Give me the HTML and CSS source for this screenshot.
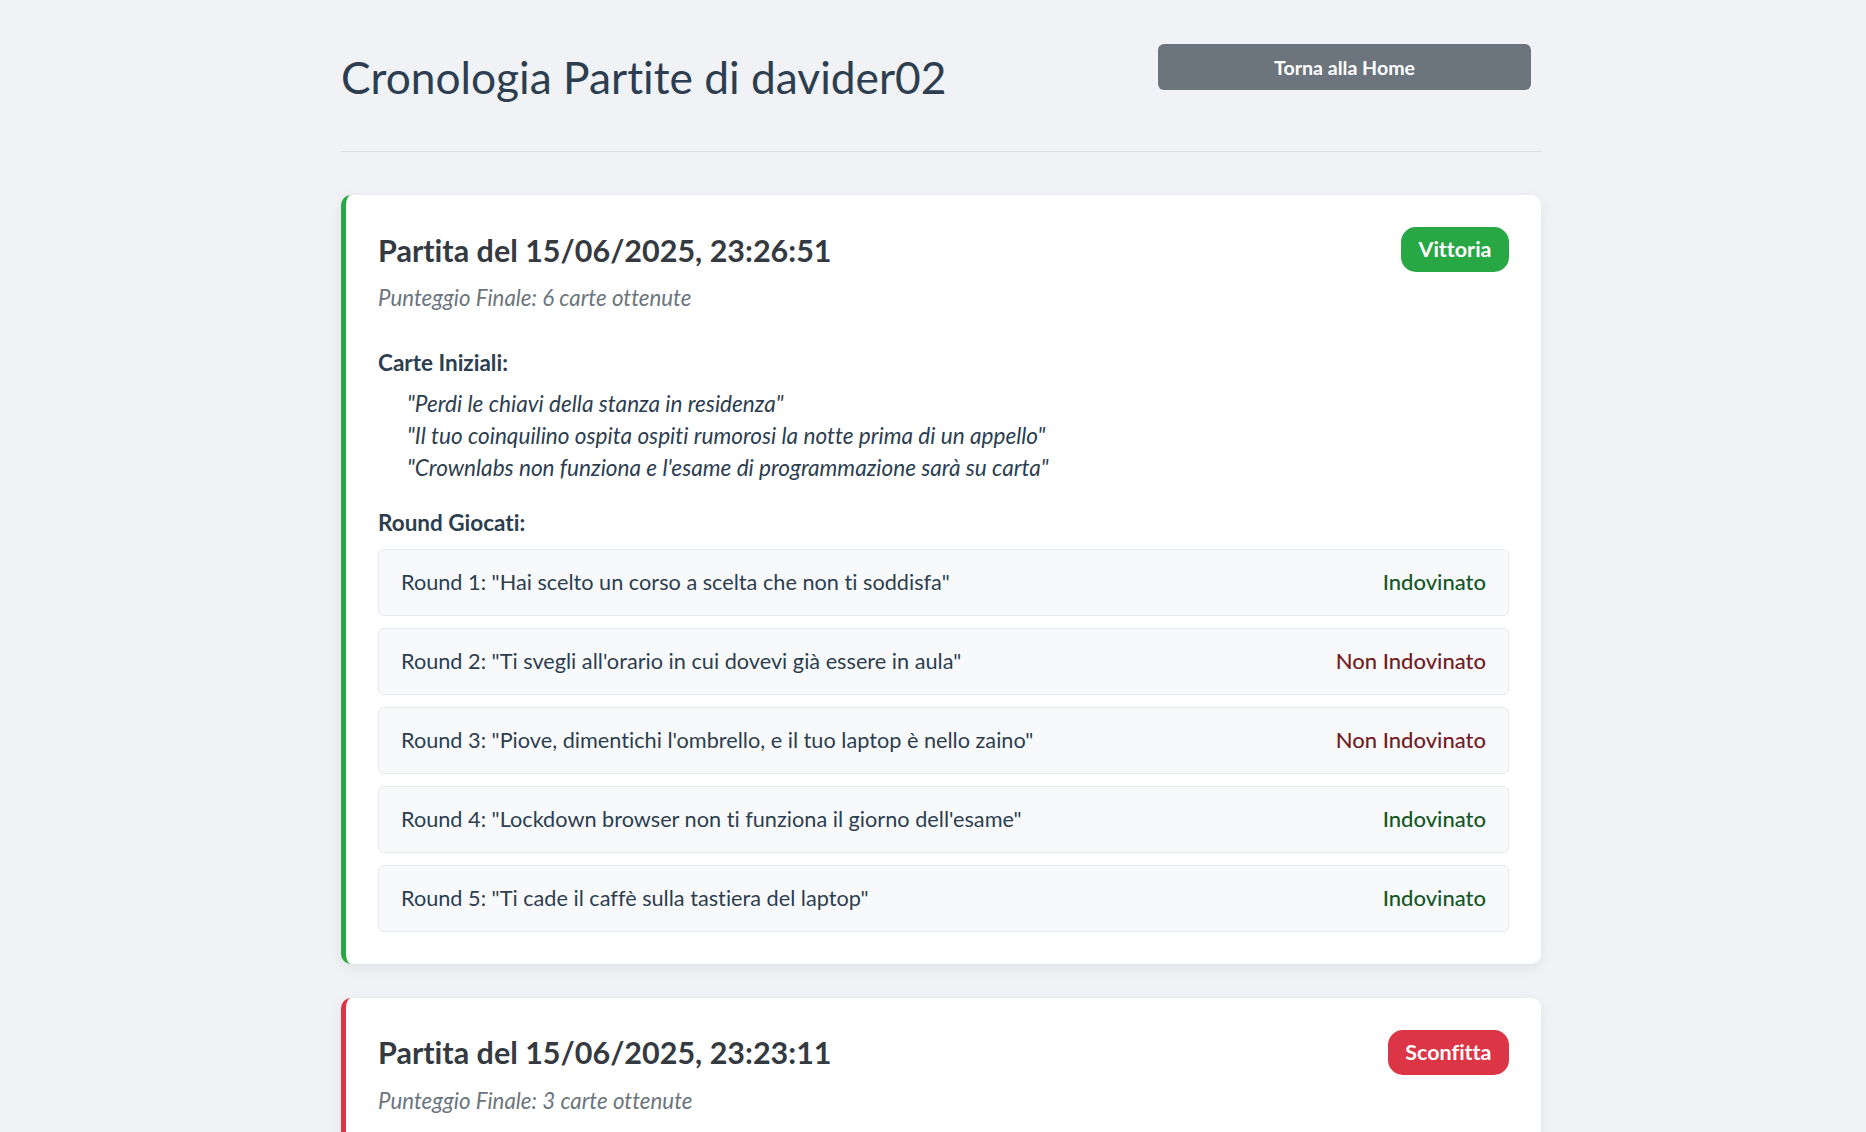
FILE: index.html
```html
<!DOCTYPE html>
<html lang="it">
<head>
<meta charset="utf-8">
<title>Cronologia Partite</title>
<link rel="stylesheet" href="styles.css">
</head>
<body>
<div class="page">
  <header class="header">
    <h1 class="title">Cronologia Partite di davider02</h1>
    <button class="home-btn" type="button">Torna alla Home</button>
  </header>
  <hr class="divider">

  <section class="game game-win">
    <div class="game-head">
      <h2 class="game-title">Partita del 15/06/2025, 23:26:51</h2>
      <span class="badge badge-win">Vittoria</span>
    </div>
    <p class="score">Punteggio Finale: 6 carte ottenute</p>

    <h3 class="label label-cards">Carte Iniziali:</h3>
    <ul class="cards">
      <li>"Perdi le chiavi della stanza in residenza"</li>
      <li>"Il tuo coinquilino ospita ospiti rumorosi la notte prima di un appello"</li>
      <li>"Crownlabs non funziona e l'esame di programmazione sarà su carta"</li>
    </ul>

    <h3 class="label label-rounds">Round Giocati:</h3>
    <ul class="rounds">
      <li class="round"><span>Round 1: "Hai scelto un corso a scelta che non ti soddisfa"</span><span class="res ok">Indovinato</span></li>
      <li class="round"><span>Round 2: "Ti svegli all'orario in cui dovevi già essere in aula"</span><span class="res ko">Non Indovinato</span></li>
      <li class="round"><span>Round 3: "Piove, dimentichi l'ombrello, e il tuo laptop è nello zaino"</span><span class="res ko">Non Indovinato</span></li>
      <li class="round"><span>Round 4: "Lockdown browser non ti funziona il giorno dell'esame"</span><span class="res ok">Indovinato</span></li>
      <li class="round"><span>Round 5: "Ti cade il caffè sulla tastiera del laptop"</span><span class="res ok">Indovinato</span></li>
    </ul>
  </section>

  <section class="game game-loss">
    <div class="game-head">
      <h2 class="game-title">Partita del 15/06/2025, 23:23:11</h2>
      <span class="badge badge-loss">Sconfitta</span>
    </div>
    <p class="score">Punteggio Finale: 3 carte ottenute</p>

    <h3 class="label label-cards">Carte Iniziali:</h3>
    <ul class="cards">
      <li>"Perdi il treno per tornare a casa"</li>
      <li>"Il professore cambia la data dell'esame"</li>
      <li>"Ti dimentichi di iscriverti all'appello"</li>
    </ul>

    <h3 class="label label-rounds">Round Giocati:</h3>
    <ul class="rounds">
      <li class="round"><span>Round 1: "Il wifi del politecnico non funziona"</span><span class="res ko">Non Indovinato</span></li>
      <li class="round"><span>Round 2: "La mensa chiude prima che tu arrivi"</span><span class="res ko">Non Indovinato</span></li>
      <li class="round"><span>Round 3: "Perdi la tessera dell'università"</span><span class="res ko">Non Indovinato</span></li>
    </ul>
  </section>
</div>
</body>
</html>
```
FILE: styles.css
```css
* { box-sizing: border-box; }

html, body {
  margin: 0;
  padding: 0;
  background: #f0f2f5;
}

body {
  font-family: "Lato", "Liberation Sans", sans-serif;
  font-variant-ligatures: none;
  color: #343a40;
}

.page {
  max-width: 1216px;
  margin: 0 auto;
  padding: 0 0 40px 16px;
}

.header {
  display: flex;
  justify-content: space-between;
  align-items: flex-start;
  padding-top: 44px;
}

.title {
  margin: 6px 0 0 0;
  font-size: 44.3px;
  line-height: 53px;
  font-weight: 400;
  color: #2c3e50;
}

.home-btn {
  width: 373px;
  height: 46px;
  margin-right: 10px;
  border: none;
  border-radius: 6px;
  background: #6c757d;
  color: #ffffff;
  font-family: "Lato", "Liberation Sans", sans-serif;
  font-variant-ligatures: none;
  font-size: 19.6px;
  font-weight: 700;
  cursor: pointer;
}

.divider {
  margin: 48px 0 43px 0;
  border: none;
  border-top: 1px solid #dcdfe4;
  height: 0;
}

.game {
  background: #ffffff;
  border-radius: 10px;
  border-left: 5px solid #28a745;
  padding: 32px 32px 32px 32px;
  margin-bottom: 34px;
  box-shadow: 0 4px 14px rgba(0, 0, 0, 0.07);
}

.game-loss { border-left-color: #dc3545; }

.game-head {
  display: flex;
  justify-content: space-between;
  align-items: center;
}

.game-title {
  margin: 0;
  font-size: 30.5px;
  line-height: 36px;
  font-weight: 700;
  color: #343a40;
}

.badge {
  display: inline-block;
  height: 45px;
  padding: 10px 17.5px;
  border-radius: 15px;
  color: #ffffff;
  font-size: 21.5px;
  line-height: 25px;
  font-weight: 700;
}

.badge-win { background: #28a745; }
.badge-loss { background: #dc3545; }

.score {
  margin: 13px 0 0 0;
  font-size: 22.3px;
  line-height: 26.4px;
  font-style: italic;
  color: #6c757d;
}

.label {
  margin: 0;
  font-size: 22.5px;
  line-height: 25.2px;
  font-weight: 700;
  color: #2c3e50;
}

.label-cards { margin-top: 38.5px; }
.label-rounds { margin-top: 26px; }

.cards {
  list-style: none;
  margin: 12.5px 0 0 0;
  padding: 0 0 0 29px;
}

.cards li {
  font-size: 22.6px;
  line-height: 32px;
  font-style: italic;
  color: #2c3e50;
}

.rounds {
  list-style: none;
  margin: 14px 0 0 0;
  padding: 0;
}

.round {
  display: flex;
  justify-content: space-between;
  align-items: center;
  height: 67px;
  padding: 0 22px 0 22px;
  margin-bottom: 12px;
  background: #f8f9fa;
  border: 1px solid #e6e9ed;
  border-radius: 6px;
  font-size: 21.7px;
  line-height: 26px;
  color: #2c3e50;
}

.round:last-child { margin-bottom: 0; }

.res { font-weight: 500; font-size: 22px; }
.res.ok { color: #155724; }
.res.ko { color: #721c24; }
```
